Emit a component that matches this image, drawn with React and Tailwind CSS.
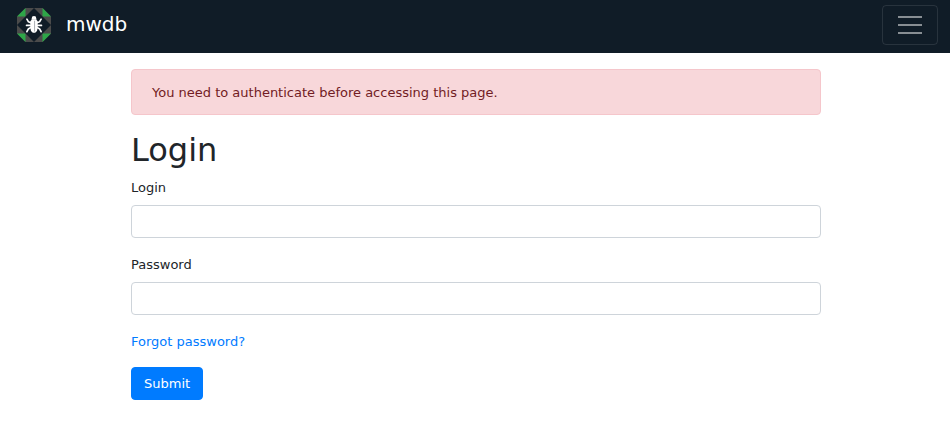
const font = "font-['DejaVu_Sans',sans-serif]";

function Logo() {
  return (
    <svg width="34" height="34" viewBox="0 0 32 32" aria-hidden="true">
      <path fill="#4b4b4b" d="M8 0h16l8 8v16l-8 8H8l-8-8V8z" />
      <path fill="#2ea648" d="M8 0v8H0zM24 0v8h8zM8 32v-8H0zM24 32v-8h8z" />
      <path fill="#101c27" d="M16 0l16 16-16 16L0 16z" />
      <path
        fill="none"
        stroke="#fff"
        strokeWidth="1.600"
        strokeLinecap="round"
        strokeLinejoin="round"
        d="M13.500 14.200l-2.700-1.200-1.500-2.500M13.500 16.400H9M13.500 18l-2.900 1.800-1.300 2.500M18.500 14.200l2.700-1.200 1.500-2.500M18.500 16.400h4.500M18.500 18l2.900 1.800 1.300 2.500"
      />
      <path fill="#fff" d="M13.800 11V9.800a2.200 2.200 0 0 1 4.400 0V11z" />
      <path fill="#fff" d="M12.600 12.500l1.300-1.700h4.200l1.300 1.700v6.500q0 3-2.300 4.200h-2.200q-2.300-1.200-2.300-4.200z" />
      <path fill="#b0b4b8" d="M16 12h1v10.200h-1z" />
    </svg>
  );
}

function Field({ label, type }) {
  return (
    <div className="mb-4">
      <label className="mb-[7px] block pt-px leading-5">{label}</label>
      <input
        type={type}
        aria-label={label}
        className="block h-[33px] w-full rounded border border-[#ced4da] bg-white px-3 outline-none"
      />
    </div>
  );
}

export default function App() {
  return (
    <div className={`min-h-screen bg-white text-[13px] leading-5 text-[#212529] ${font}`}>
      <nav className="flex h-[53px] items-center justify-between bg-[#101c27] pr-3 pl-[17px] pb-[3px]">
        <a className="flex items-center gap-[15px] text-xl leading-[30px] text-white">
          <Logo />
          <span className="-mt-[3px]">mwdb</span>
        </a>
        <button
          aria-label="Toggle navigation"
          className="flex h-10 w-14 flex-col items-center justify-center gap-1.5 rounded border border-white/10"
        >
          <span className="h-0.5 w-6 bg-white/50" />
          <span className="h-0.5 w-6 bg-white/50" />
          <span className="h-0.5 w-6 bg-white/50" />
        </button>
      </nav>
      <main className="mx-auto w-[690px] translate-x-px pt-4">
        <div className="mb-4 rounded border border-[#f5c6cb] bg-[#f8d7da] px-5 pt-[13px] pb-[11px] text-[#721c24]">
          You need to authenticate before accessing this page.
        </div>
        <h2 className="mb-2 text-[32px] leading-[38px]">Login</h2>
        <Field label="Login" type="text" />
        <Field label="Password" type="password" />
        <div className="mb-[15px] pt-px">
          <a className="text-[#007bff]">Forgot password?</a>
        </div>
        <button className="h-[33px] rounded border border-[#007bff] bg-[#007bff] px-3 text-white">
          Submit
        </button>
      </main>
    </div>
  );
}
